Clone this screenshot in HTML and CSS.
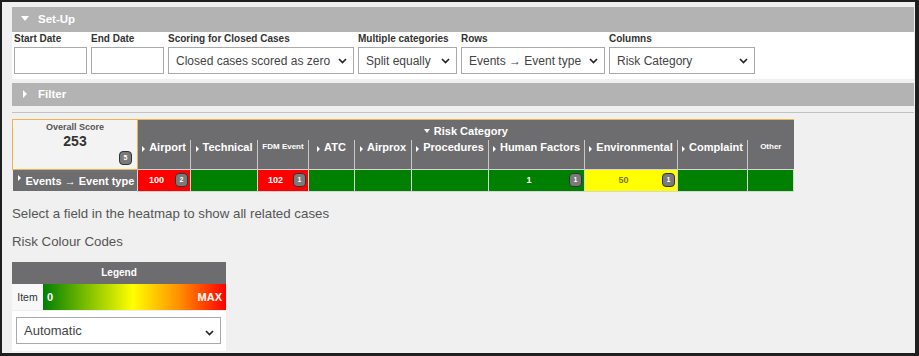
FILE: index.html
```html
<!DOCTYPE html>
<html>
<head>
    <title>Risk Heatmap</title>
    <link rel="stylesheet" href="styles.css">
</head>
<body>
<div class="frame">
    <section class="panel">
        <div class="bar"><span class="tri-down"></span>Set-Up</div>
        <div class="setup-form">
            <label class="field w-start">
                <span class="field-label">Start Date</span>
                <input type="text" class="field-input">
            </label>
            <label class="field w-end">
                <span class="field-label">End Date</span>
                <input type="text" class="field-input">
            </label>
            <label class="field w-scoring">
                <span class="field-label">Scoring for Closed Cases</span>
                <span class="select-wrap">
                    <select class="field-input"><option>Closed cases scored as zero</option></select>
                    <svg class="chev" width="9" height="6" viewBox="0 0 9 6"><path d="M1 1 L4.5 4.5 L8 1" fill="none" stroke="#222" stroke-width="1.6"/></svg>
                </span>
            </label>
            <label class="field w-multi">
                <span class="field-label">Multiple categories</span>
                <span class="select-wrap">
                    <select class="field-input"><option>Split equally</option></select>
                    <svg class="chev" width="9" height="6" viewBox="0 0 9 6"><path d="M1 1 L4.5 4.5 L8 1" fill="none" stroke="#222" stroke-width="1.6"/></svg>
                </span>
            </label>
            <label class="field w-rows">
                <span class="field-label">Rows</span>
                <span class="select-wrap">
                    <select class="field-input"><option>Events &rarr; Event type</option></select>
                    <svg class="chev" width="9" height="6" viewBox="0 0 9 6"><path d="M1 1 L4.5 4.5 L8 1" fill="none" stroke="#222" stroke-width="1.6"/></svg>
                </span>
            </label>
            <label class="field w-cols">
                <span class="field-label">Columns</span>
                <span class="select-wrap">
                    <select class="field-input"><option>Risk Category</option></select>
                    <svg class="chev" width="9" height="6" viewBox="0 0 9 6"><path d="M1 1 L4.5 4.5 L8 1" fill="none" stroke="#222" stroke-width="1.6"/></svg>
                </span>
            </label>
        </div>
    </section>

    <div class="bar filter"><span class="tri-right"></span>Filter</div>
    <hr class="sep">

    <table class="heatmap">
        <colgroup>
            <col style="width:125px">
            <col style="width:53px">
            <col style="width:67px">
            <col style="width:51px">
            <col style="width:46px">
            <col style="width:57px">
            <col style="width:77px">
            <col style="width:96px">
            <col style="width:93px">
            <col style="width:70px">
            <col style="width:46px">
        </colgroup>
        <thead>
            <tr>
                <th class="overall" rowspan="2">
                    <div class="overall-label">Overall Score</div>
                    <div class="overall-value">253</div>
                    <span class="badge overall-badge">5</span>
                </th>
                <th class="group" colspan="10"><span class="tri-down small"></span>Risk Category</th>
            </tr>
            <tr class="cols">
                <th><span class="tri-right tiny"></span>Airport</th>
                <th><span class="tri-right tiny"></span>Technical</th>
                <th class="mini">FDM Event</th>
                <th><span class="tri-right tiny"></span>ATC</th>
                <th><span class="tri-right tiny"></span>Airprox</th>
                <th><span class="tri-right tiny"></span>Procedures</th>
                <th><span class="tri-right tiny"></span>Human Factors</th>
                <th><span class="tri-right tiny"></span>Environmental</th>
                <th><span class="tri-right tiny"></span>Complaint</th>
                <th class="mini">Other</th>
            </tr>
        </thead>
        <tbody>
            <tr>
                <th class="row-head"><span class="tri-right tiny raised"></span>Events &rarr; Event type</th>
                <td class="hot"><span class="badge">2</span><span class="val">100</span></td>
                <td class="ok"></td>
                <td class="hot"><span class="badge">1</span><span class="val">102</span></td>
                <td class="ok"></td>
                <td class="ok"></td>
                <td class="ok"></td>
                <td class="ok"><span class="badge">1</span><span class="val">1</span></td>
                <td class="warn"><span class="badge">1</span><span class="val">50</span></td>
                <td class="ok"></td>
                <td class="ok"></td>
            </tr>
        </tbody>
    </table>

    <p class="hint">Select a field in the heatmap to show all related cases</p>
    <p class="hint">Risk Colour Codes</p>

    <div class="legend">
        <div class="legend-head">Legend</div>
        <div class="legend-row">
            <span class="legend-item">Item</span>
            <div class="legend-scale">
                <span>0</span>
                <span>MAX</span>
            </div>
        </div>
        <div class="legend-pick">
            <span class="select-wrap">
                <select class="field-input"><option>Automatic</option></select>
                <svg class="chev" width="9" height="6" viewBox="0 0 9 6"><path d="M1 1 L4.5 4.5 L8 1" fill="none" stroke="#222" stroke-width="1.6"/></svg>
            </span>
        </div>
    </div>
</div>
</body>
</html>
```

FILE: styles.css
```css
html, body {
    margin: 0;
    padding: 0;
}

.frame {
    box-sizing: border-box;
    width: 919px;
    height: 356px;
    border: 2px solid #1f1f1f;
    border-right-width: 4px;
    border-bottom-width: 3px;
    background-color: #f0f0f0;
    padding: 5px 1px 0 10px;
    overflow: hidden;
    font-family: "Liberation Sans", Arial, sans-serif;
    color: #333;
}

/* grey section bars */
.bar {
    height: 25px;
    line-height: 25px;
    background-color: #b3b3b3;
    color: white;
    font-weight: bold;
    font-size: 11.5px;
    padding-left: 9px;
}

.bar.filter {
    height: 23px;
    line-height: 23px;
    margin-top: 4px;
    padding-left: 11px;
}

.tri-down {
    display: inline-block;
    width: 0;
    height: 0;
    border-left: 4px solid transparent;
    border-right: 4px solid transparent;
    border-top: 5px solid white;
    margin-right: 9px;
    vertical-align: 2px;
}

.tri-down.small {
    border-left-width: 3px;
    border-right-width: 3px;
    border-top-width: 4px;
    margin-right: 4px;
    vertical-align: 2px;
}

.tri-right {
    display: inline-block;
    width: 0;
    height: 0;
    border-top: 4px solid transparent;
    border-bottom: 4px solid transparent;
    border-left: 4px solid white;
    margin-right: 11px;
    vertical-align: 0;
}

.tri-right.tiny {
    border-top-width: 3px;
    border-bottom-width: 3px;
    border-left-width: 3px;
    margin-right: 4px;
    vertical-align: -1px;
}

.tri-right.raised {
    vertical-align: 4px;
    margin-right: 5px;
}

/* set-up form */
.setup-form {
    display: flex;
    gap: 4px;
    background-color: white;
    padding: 1px 0 5px 2px;
}

.field {
    display: flex;
    flex-direction: column;
}

.field-label {
    font-size: 10px;
    font-weight: bold;
    color: #333;
    height: 12px;
    line-height: 12px;
}

.field-input {
    box-sizing: border-box;
    width: 100%;
    height: 27px;
    margin: 2px 0 0 0;
    border: 1px solid #a9a9a9;
    background-color: white;
    font-family: "Liberation Sans", Arial, sans-serif;
    font-size: 12px;
    color: #444;
    padding: 0 4px;
    border-radius: 0;
    outline: none;
}

.select-wrap {
    position: relative;
    display: block;
}

.select-wrap select {
    appearance: none;
    -webkit-appearance: none;
    padding: 0 15px 0 7px;
    display: block;
}

.chev {
    position: absolute;
    right: 7px;
    top: 13px;
    pointer-events: none;
}

.w-start { width: 73px; }
.w-end { width: 73px; }
.w-scoring { width: 186px; }
.w-multi { width: 99px; }
.w-rows { width: 144px; }
.w-cols { width: 146px; }

.sep {
    border: 0;
    border-top: 1px solid #c2c2c2;
    margin: 6px 0 6px 0;
    height: 0;
}

/* heatmap */
.heatmap {
    border-collapse: collapse;
    table-layout: fixed;
    width: 781px;
}

.heatmap th,
.heatmap td {
    padding: 0;
}

.heatmap thead th {
    background-color: #6d6d6f;
    color: white;
    font-size: 11px;
    font-weight: bold;
    border-top: 1px solid #f2b24c;
}

.heatmap .overall {
    background-color: #f3f3f3;
    border: 1px solid #f2b24c;
    height: 48px;
    position: relative;
    vertical-align: top;
    text-align: center;
}

.overall-label {
    font-size: 9px;
    color: #555;
    margin-top: 2px;
}

.overall-value {
    font-size: 14px;
    color: #333;
    margin-top: 1px;
}

.overall-badge {
    position: absolute;
    right: 3px;
    bottom: 4px;
}

.heatmap .group {
    height: 19px;
    text-align: center;
    vertical-align: middle;
    padding-top: 1px;
}

.heatmap .cols th {
    height: 29px;
    border-top: 0;
    border-left: 1px solid #c8c8c8;
    vertical-align: top;
    text-align: center;
    line-height: 14px;
    padding-top: 0;
    white-space: nowrap;
    overflow: hidden;
}

.heatmap .cols th.mini {
    font-size: 8px;
}

.heatmap .row-head {
    background-color: #6d6d6f;
    color: white;
    font-size: 11px;
    text-align: left;
    padding-left: 5px;
    white-space: nowrap;
    height: 21px;
    border-top: 1px solid #d0d0d0;
}

.heatmap td {
    border: 1px solid #d6d6d6;
    height: 19px;
    font-size: 9px;
    font-weight: bold;
    color: white;
    text-align: center;
    vertical-align: middle;
}

.heatmap td.hot { background-color: #ff0000; }
.heatmap td.ok { background-color: #008000; }
.heatmap td.warn { background-color: #ffff00; color: #77770a; }

.val {
    display: block;
    margin-right: 15px;
    line-height: 19px;
}

.badge {
    float: right;
    box-sizing: border-box;
    width: 13px;
    height: 14px;
    margin: 2px 2px 0 0;
    border: 1.5px solid #333;
    border-radius: 4px;
    background-color: #7a7a7a;
    color: white;
    font-size: 7px;
    font-weight: bold;
    line-height: 11px;
    text-align: center;
}

/* texts below */
.hint {
    font-size: 13.3px;
    color: #555;
    margin: 14px 0 0 0;
    line-height: 16px;
}

.hint + .hint {
    margin-top: 12px;
}

/* legend */
.legend {
    width: 214px;
    margin-top: 12px;
    background-color: #f8f8f8;
}

.legend-head {
    height: 22px;
    line-height: 22px;
    background-color: #6d6d6f;
    color: white;
    font-size: 10px;
    font-weight: bold;
    text-align: center;
}

.legend-row {
    display: flex;
    height: 26px;
}

.legend-item {
    width: 31px;
    line-height: 26px;
    font-size: 10.5px;
    color: #333;
    text-align: center;
    background-color: #f8f8f8;
}

.legend-scale {
    flex: 1;
    display: flex;
    justify-content: space-between;
    align-items: center;
    padding: 0 4px 0 4px;
    background: linear-gradient(to right, #008000 0%, #ffff00 49%, #ff8c00 75%, #ff0000 100%);
    color: white;
    font-size: 11px;
    font-weight: bold;
}

.legend-pick {
    padding: 4px 5px 7px 4px;
    background-color: white;
    border-top: 1px solid #eeeeee;
}

.legend-pick .field-input {
    margin-top: 2px;
    font-size: 13px;
}
```
